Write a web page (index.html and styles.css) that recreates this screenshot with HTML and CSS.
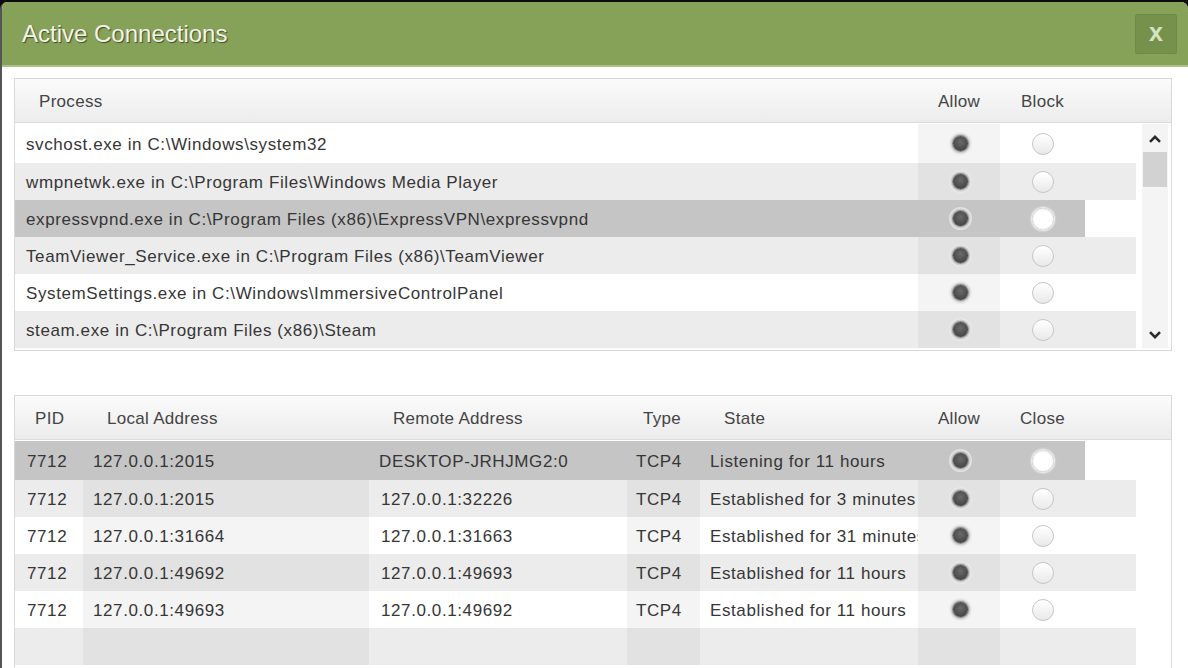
FILE: index.html
```html
<!DOCTYPE html>
<html>
<head>
<meta charset="utf-8">
<title>Active Connections</title>
<link rel="stylesheet" href="styles.css">
</head>
<body>
<div class="window">
  <div class="titlebar">
    <span class="title">Active Connections</span>
    <div class="close">x</div>
  </div>
  <div class="content">
    <div class="panel procs">
      <div class="head pgrid">
        <div class="h pad">Process</div>
        <div class="h ctr">Allow</div>
        <div class="h ctr">Block</div>
        <div class="h"></div>
      </div>
      <div class="body">
        <div class="rows">
          <div class="row pgrid first">
            <div class="c pad">svchost.exe in C:\Windows\system32</div>
            <div class="c t ctr"><span class="on"></span></div>
            <div class="c ctr"><span class="off"></span></div>
            <div class="c x"></div>
          </div>
          <div class="row pgrid alt">
            <div class="c pad">wmpnetwk.exe in C:\Program Files\Windows Media Player</div>
            <div class="c t ctr"><span class="on"></span></div>
            <div class="c ctr"><span class="off"></span></div>
            <div class="c x"></div>
          </div>
          <div class="row pgrid sel">
            <div class="c pad">expressvpnd.exe in C:\Program Files (x86)\ExpressVPN\expressvpnd</div>
            <div class="c t ctr"><span class="on"></span></div>
            <div class="c ctr"><span class="off"></span></div>
            <div class="c x"></div>
          </div>
          <div class="row pgrid alt">
            <div class="c pad">TeamViewer_Service.exe in C:\Program Files (x86)\TeamViewer</div>
            <div class="c t ctr"><span class="on"></span></div>
            <div class="c ctr"><span class="off"></span></div>
            <div class="c x"></div>
          </div>
          <div class="row pgrid">
            <div class="c pad">SystemSettings.exe in C:\Windows\ImmersiveControlPanel</div>
            <div class="c t ctr"><span class="on"></span></div>
            <div class="c ctr"><span class="off"></span></div>
            <div class="c x"></div>
          </div>
          <div class="row pgrid alt">
            <div class="c pad">steam.exe in C:\Program Files (x86)\Steam</div>
            <div class="c t ctr"><span class="on"></span></div>
            <div class="c ctr"><span class="off"></span></div>
            <div class="c x"></div>
          </div>
        </div>
        <div class="scrollbar">
          <svg class="arrow" width="14" height="10" viewBox="0 0 14 10"><path d="M2 7.8 L7 2.8 L12 7.8" fill="none" stroke="#2a2a2a" stroke-width="2.6"/></svg>
          <div class="track"><div class="thumb"></div></div>
          <svg class="arrow" width="14" height="10" viewBox="0 0 14 10"><path d="M2 2.2 L7 7.2 L12 2.2" fill="none" stroke="#2a2a2a" stroke-width="2.6"/></svg>
        </div>
      </div>
    </div>

    <div class="panel conns">
      <div class="head cgrid">
        <div class="h hpid">PID</div>
        <div class="h pad">Local Address</div>
        <div class="h pad">Remote Address</div>
        <div class="h htype">Type</div>
        <div class="h pad">State</div>
        <div class="h ctr">Allow</div>
        <div class="h ctr">Close</div>
        <div class="h"></div>
      </div>
      <div class="body">
        <div class="rows">
          <div class="row cgrid first sel">
            <div class="c dpid">7712</div>
            <div class="c t dpad">127.0.0.1:2015</div>
            <div class="c dpad">DESKTOP-JRHJMG2:0</div>
            <div class="c t dtype">TCP4</div>
            <div class="c dpad">Listening for 11 hours</div>
            <div class="c t ctr"><span class="on"></span></div>
            <div class="c ctr"><span class="off"></span></div>
            <div class="c x"></div>
          </div>
          <div class="row cgrid alt">
            <div class="c dpid">7712</div>
            <div class="c t dpad">127.0.0.1:2015</div>
            <div class="c rpad">127.0.0.1:32226</div>
            <div class="c t dtype">TCP4</div>
            <div class="c dpad">Established for 3 minutes</div>
            <div class="c t ctr"><span class="on"></span></div>
            <div class="c ctr"><span class="off"></span></div>
            <div class="c x"></div>
          </div>
          <div class="row cgrid">
            <div class="c dpid">7712</div>
            <div class="c t dpad">127.0.0.1:31664</div>
            <div class="c rpad">127.0.0.1:31663</div>
            <div class="c t dtype">TCP4</div>
            <div class="c dpad">Established for 31 minutes</div>
            <div class="c t ctr"><span class="on"></span></div>
            <div class="c ctr"><span class="off"></span></div>
            <div class="c x"></div>
          </div>
          <div class="row cgrid alt">
            <div class="c dpid">7712</div>
            <div class="c t dpad">127.0.0.1:49692</div>
            <div class="c rpad">127.0.0.1:49693</div>
            <div class="c t dtype">TCP4</div>
            <div class="c dpad">Established for 11 hours</div>
            <div class="c t ctr"><span class="on"></span></div>
            <div class="c ctr"><span class="off"></span></div>
            <div class="c x"></div>
          </div>
          <div class="row cgrid">
            <div class="c dpid">7712</div>
            <div class="c t dpad">127.0.0.1:49693</div>
            <div class="c rpad">127.0.0.1:49692</div>
            <div class="c t dtype">TCP4</div>
            <div class="c dpad">Established for 11 hours</div>
            <div class="c t ctr"><span class="on"></span></div>
            <div class="c ctr"><span class="off"></span></div>
            <div class="c x"></div>
          </div>
          <div class="row cgrid alt">
            <div class="c"></div>
            <div class="c t"></div>
            <div class="c"></div>
            <div class="c t"></div>
            <div class="c"></div>
            <div class="c t"></div>
            <div class="c"></div>
            <div class="c x"></div>
          </div>
        </div>
      </div>
    </div>
  </div>
</div>
</body>
</html>
```

FILE: styles.css
```css
html, body {
  margin: 0;
  padding: 0;
  background: #0d0d0d;
  width: 1188px;
  height: 668px;
  overflow: hidden;
}

.window {
  margin-top: 2px;
  height: 666px;
  background: #ffffff;
  border-left: 2px solid #555555;
  border-radius: 7px 7px 0 0;
  overflow: hidden;
  font-family: "Liberation Sans", Arial, sans-serif;
  box-sizing: border-box;
}

.titlebar {
  height: 63px;
  background: #86a259;
  border-bottom: 2px solid #a9c184;
  display: flex;
  align-items: center;
  justify-content: space-between;
  padding: 0 11px 0 20px;
}

.title {
  font-size: 24px;
  color: #f2f2ea;
  text-shadow: 1px 1px 1px rgba(40, 50, 20, 0.75);
}

.close {
  width: 42px;
  height: 40px;
  margin-top: 1px;
  background: #76914b;
  border-radius: 3px;
  box-shadow: inset 0 0 0 1px #6f8946;
  color: #d6e2c4;
  font-size: 25px;
  font-weight: bold;
  display: flex;
  align-items: center;
  justify-content: center;
  line-height: 1;
  padding-bottom: 3px;
  box-sizing: border-box;
}

.content {
  padding: 11px 16px 0 12px;
  display: flex;
  flex-direction: column;
  gap: 44px;
}

.panel {
  border: 1px solid #d9d9d9;
  background: #ffffff;
}

.head {
  background: linear-gradient(#fbfbfb, #ececec);
  border-bottom: 1px solid #dcdcdc;
  box-sizing: border-box;
  height: 44px;
}

.pgrid {
  display: grid;
  grid-template-columns: 903px 82px 85px 51px;
}

.cgrid {
  display: grid;
  grid-template-columns: 68px 286px 258px 73px 218px 82px 85px 51px;
}

.h {
  display: flex;
  align-items: center;
  font-size: 17px;
  color: #444444;
  white-space: nowrap;
  padding-top: 2px;
  letter-spacing: 0.3px;
}

.h.pad { padding-left: 24px; }
.h.hpid { padding-left: 20px; }
.h.htype { padding-left: 16px; }
.h.ctr { justify-content: center; }

.body {
  display: flex;
  padding: 1px 0 2px;
}

.procs .body {
  height: 227px;
  box-sizing: border-box;
}

.rows {
  width: 1121px;
  display: flex;
  flex-direction: column;
}

.row {
  height: 37px;
}

.row.first {
  height: 39px;
}

.c {
  display: flex;
  align-items: center;
  font-size: 17px;
  letter-spacing: 0.6px;
  color: #363636;
  white-space: nowrap;
  overflow: hidden;
  background-color: #ffffff;
  padding-top: 2px;
  box-sizing: border-box;
}

.c.pad { padding-left: 11px; }
.c.dpad { padding-left: 10px; }
.c.rpad { padding-left: 12px; }
.c.dpid { padding-left: 12px; }
.c.dtype { padding-left: 9px; }
.c.ctr { justify-content: center; padding-top: 0; }

.row.alt .c { background-color: #ececec; }

.c.t { background-image: linear-gradient(rgba(0,0,0,0.045), rgba(0,0,0,0.045)); }

.row.sel .c { background-color: #c5c5c5; background-image: none; }
.row.sel .c.x { background-color: #ffffff; }

.on {
  width: 15px;
  height: 15px;
  border-radius: 50%;
  background: radial-gradient(circle at 50% 40%, #6a6a6a, #474747 70%);
  box-shadow: 0 0 0 1px #8c8c8c, 0 0 0 2.5px #cdcdcd, 0 0 0 4px rgba(232,232,232,0.8);
  margin-left: 2px;
}

.off {
  width: 22px;
  height: 22px;
  border-radius: 50%;
  box-sizing: border-box;
  border: 1px solid #c6c6c6;
  background: linear-gradient(#ffffff, #e9e9e9);
  box-shadow: inset 0 1px 1px #ffffff;
  margin-left: 1px;
}

.row.sel .off {
  border-color: #e4e4e4;
  background: radial-gradient(circle at 50% 55%, #ffffff 55%, #f0f0f0 100%);
  box-shadow: 0 0 2px 1px rgba(255,255,255,0.9);
}

.scrollbar {
  width: 26px;
  margin-left: 6px;
  background: #f4f4f4;
  display: flex;
  flex-direction: column;
  align-items: center;
  padding-top: 10px;
  box-sizing: border-box;
  height: 224px;
}

.arrow {
  flex: none;
}

.track {
  flex: 1;
  width: 100%;
  padding-top: 8px;
  box-sizing: border-box;
}

.thumb {
  width: 24px;
  height: 35px;
  margin-left: 1px;
  background: #d2d2d2;
}

.scrollbar .arrow:last-child {
  margin-bottom: 8px;
}

.conns .body {
  height: 228px;
  box-sizing: border-box;
  padding-bottom: 0;
}
```
